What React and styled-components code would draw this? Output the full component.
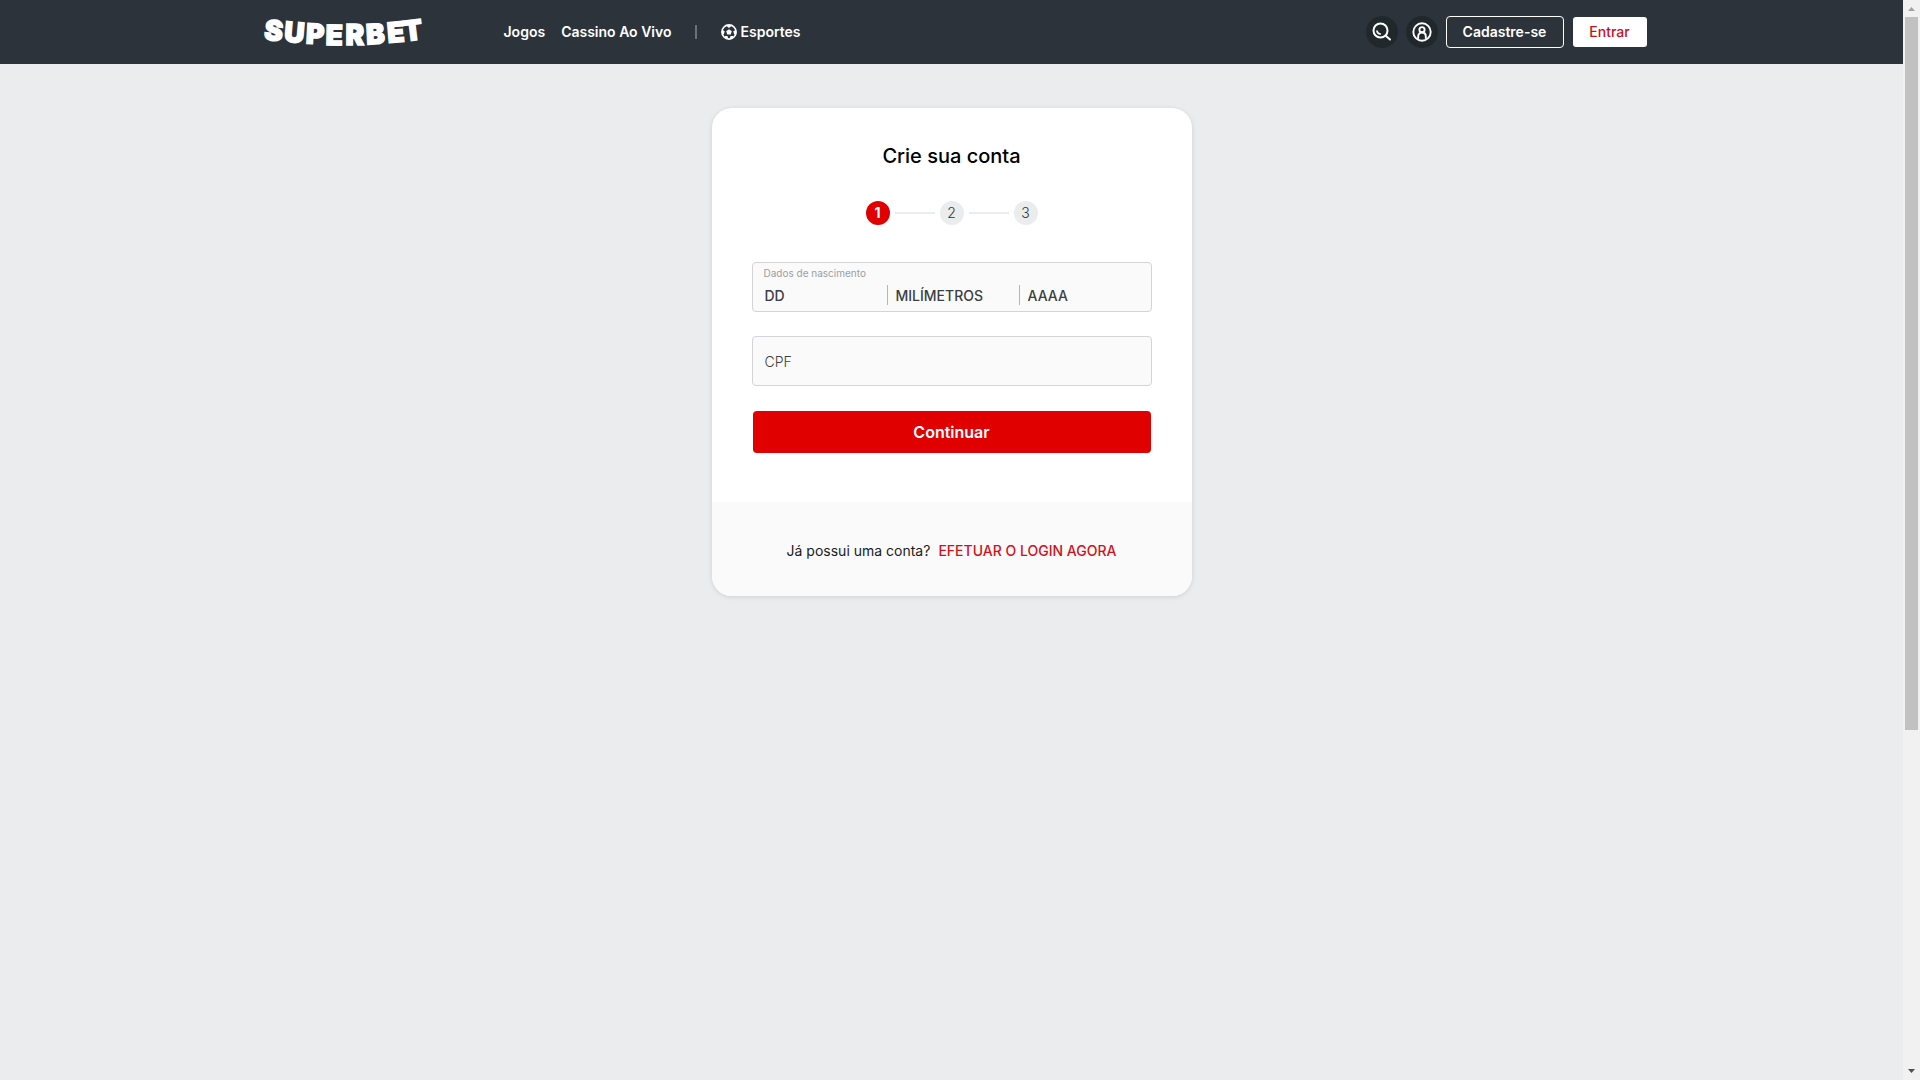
import React from "react";
import styled, { createGlobalStyle } from "styled-components";

const GlobalStyle = createGlobalStyle`
  *, *::before, *::after { box-sizing: border-box; }
  body {
    margin: 0;
    background: #ebecee;
    font-family: Inter, "Liberation Sans", sans-serif;
    font-size: 14px;
    line-height: 20px;
    color: #1a1a1a;
  }
  button, input { font-family: inherit; font-size: inherit; line-height: inherit; }
  a { text-decoration: none; color: inherit; }
`;

const Shell = styled.div`
  display: flex;
  height: 100vh;
  overflow: hidden;
`;

const Page = styled.div`
  flex: 1;
  min-width: 0;
`;

const Header = styled.header`
  background: #2c333a;
  color: #fff;
`;

const HeaderInner = styled.div`
  display: flex;
  align-items: center;
  justify-content: space-between;
  max-width: 1392px;
  height: 64px;
  margin: 0 auto;
  padding-left: 8px;
`;

const LogoLink = styled.a`
  display: flex;
  margin-right: 80px;
`;

const LogoText = styled.text`
  font-family: Inter, sans-serif;
  font-size: 28px;
  font-weight: 900;
  fill: #fff;
  stroke: #fff;
  stroke-width: 1.4px;
  stroke-linejoin: miter;
`;

const Nav = styled.nav`
  display: flex;
  flex: 1;
  align-items: center;
`;

const NavLink = styled.a`
  display: flex;
  align-items: center;
  gap: 4px;
  margin-right: 16px;
  font-weight: 600;
`;

const NavDivider = styled.span`
  width: 2px;
  height: 14px;
  margin: 0 24px 0 7px;
  background: #6b7075;
`;

const Actions = styled.div`
  display: flex;
  align-items: center;
  gap: 8px;
`;

const IconButton = styled.button`
  display: flex;
  align-items: center;
  justify-content: center;
  width: 32px;
  height: 32px;
  padding: 0;
  border: 0;
  border-radius: 50%;
  background: #21282c;
  color: #fff;
`;

const ActionButton = styled.button`
  min-width: ${(p) => (p.$filled ? "76px" : "118px")};
  height: 32px;
  padding: 0 12px;
  border: 1px solid ${(p) => (p.$filled ? "transparent" : "#fff")};
  border-radius: 4px;
  background: ${(p) => (p.$filled ? "#fff" : "transparent")};
  background-clip: padding-box;
  color: ${(p) => (p.$filled ? "#c8101a" : "#fff")};
  font-weight: ${(p) => (p.$filled ? 500 : 600)};
`;

const Main = styled.main`
  display: flex;
  justify-content: center;
  padding-top: 44px;
`;

const Card = styled.section`
  width: 480px;
  border-radius: 20px;
  background: #fff;
  box-shadow: 0 1px 5px rgba(0, 0, 0, 0.12);
  overflow: hidden;
`;

const Form = styled.form`
  display: flex;
  flex-direction: column;
  gap: 24px;
  padding: 36px 40px 48px;
`;

const Title = styled.h1`
  margin: 0;
  color: #000;
  font-size: 20px;
  font-weight: 500;
  line-height: 24px;
  text-align: center;
`;

const Steps = styled.ol`
  display: flex;
  align-items: center;
  justify-content: center;
  gap: 5px;
  margin: 9px 0 13px;
  padding: 0;
  list-style: none;
`;

const Step = styled.li`
  width: 24px;
  height: 24px;
  border-radius: 50%;
  background: ${(p) => (p.$active ? "#e10000" : "#ebecee")};
  color: ${(p) => (p.$active ? "#fff" : "#303336")};
  font-weight: ${(p) => (p.$active ? 700 : 300)};
  line-height: 24px;
  text-align: center;
`;

const StepLine = styled.li`
  width: 40px;
  height: 2px;
  background: #ebecee;
`;

const fieldBox = `
  width: 100%;
  height: 50px;
  margin: 0;
  border: 1px solid #d4d4d6;
  border-radius: 4px;
  background: #fafafa;
`;

const DateField = styled.fieldset`
  ${fieldBox}
  min-width: 0;
  padding: 3px 0;
`;

const DateLabel = styled.legend`
  float: left;
  width: 100%;
  height: 19px;
  padding: 0 11px;
  color: #9c9ea1;
  font-size: 10px;
  line-height: 14px;
`;

const DateParts = styled.div`
  display: grid;
  clear: both;
  grid-template-columns: 134px 132px 1fr;
`;

const DateInput = styled.input`
  width: 100%;
  height: 20px;
  padding: 1px 8px 0;
  border: 0;
  border-left: 1px solid #b4b6b8;
  background: none;
  color: #3c3e41;
  font-weight: 500;
  &:first-child { padding-left: 12px; border-left: 0; }
  &::placeholder { color: inherit; opacity: 1; }
`;

const TextInput = styled.input`
  ${fieldBox}
  padding: 0 12px;
  color: #3c3e41;
  font-weight: 300;
  &::placeholder { color: inherit; opacity: 1; }
`;

const Submit = styled.button`
  height: 44px;
  border: 1px solid transparent;
  border-radius: 5px;
  background: #e10000;
  background-clip: padding-box;
  color: #fff;
  font-size: 16px;
  font-weight: 600;
`;

const CardFooter = styled.footer`
  display: flex;
  justify-content: center;
  gap: 8px;
  padding: 39px 40px 35px;
  background: #fafafa;
`;

const LoginLink = styled.a`
  color: #d0111b;
  font-weight: 500;
`;

const ScrollRail = styled.div`
  display: flex;
  flex-direction: column;
  width: 17px;
  padding: 0 2px;
  background: #f1f1f1;
`;

const ScrollThumb = styled.div`
  flex: 713;
  background: #c1c1c1;
`;

const ScrollSpace = styled.div`
  flex: 333;
`;

const ScrollArrow = styled.svg`
  flex: none;
  width: 13px;
  height: 17px;
`;

function Logo() {
  return (
    <svg width="160" height="48" viewBox="0 0 160 48" overflow="visible" role="img" aria-label="Superbet">
      <LogoText
        x="-0.5 19.5 41.5 61.5 81.5 102.5 124 140.5"
        y="31.5 33.5 35.5 37 37 36.5 35 33.500"
        rotate="6 5 3 1 0 -3 -5 -7"
      >
        SUPERBET
      </LogoText>
    </svg>
  );
}

function BallIcon() {
  return (
    <svg width="16" height="16" viewBox="0 0 16 16" fill="none" aria-hidden="true">
      <circle cx="8" cy="8" r="7.1" stroke="#fff" strokeWidth="1.7" />
      <path d="M8 5.2l2.8 2-1.1 3.3H6.3L5.2 7.2z" fill="#fff" />
      <path
        d="M4.6 1.2h6.8L8 4zM1 5.7l2.7 1.5-.9 3.4L.8 9.5zM15 5.7l-2.7 1.5.9 3.4 2-1.1zM3.6 12l2.8-.1 1 3.2-2.6-.7zM12.4 12l-2.8-.1-1 3.2 2.6-.7z"
        fill="#fff"
      />
    </svg>
  );
}

function SearchIcon() {
  return (
    <svg width="20" height="20" viewBox="0 0 20 20" fill="none" stroke="#fff" strokeWidth="2" strokeLinecap="round" aria-hidden="true">
      <circle cx="8.5" cy="8.5" r="7" />
      <path d="M13.7 13.7L18 17.5" />
      <path d="M5 9c.3 1.7 1.600 2.8 3.3 3" strokeWidth="1.6" />
    </svg>
  );
}

function AccountIcon() {
  return (
    <svg width="20" height="20" viewBox="0 0 20 20" fill="none" stroke="#fff" strokeWidth="1.9" strokeLinecap="round" aria-hidden="true">
      <circle cx="10" cy="10" r="8.7" />
      <circle cx="10" cy="7.7" r="2.6" />
      <path d="M6.2 16v-1.500c0-2.400 1.500-4 3.800-4s3.800 1.600 3.800 4V16" />
    </svg>
  );
}

export default function App() {
  return (
    <>
      <GlobalStyle />
      <Shell>
        <Page>
          <Header>
            <HeaderInner>
              <LogoLink href="#inicio"><Logo /></LogoLink>
              <Nav>
                <NavLink href="#jogos">Jogos</NavLink>
                <NavLink href="#cassino">Cassino Ao Vivo</NavLink>
                <NavDivider />
                <NavLink href="#esportes"><BallIcon />Esportes</NavLink>
              </Nav>
              <Actions>
                <IconButton type="button" aria-label="Buscar"><SearchIcon /></IconButton>
                <IconButton type="button" aria-label="Conta"><AccountIcon /></IconButton>
                <ActionButton type="button">Cadastre-se</ActionButton>
                <ActionButton type="button" $filled>Entrar</ActionButton>
              </Actions>
            </HeaderInner>
          </Header>
          <Main>
            <Card>
              <Form onSubmit={(e) => e.preventDefault()}>
                <Title>Crie sua conta</Title>
                <Steps>
                  <Step $active aria-current="step">1</Step>
                  <StepLine aria-hidden="true" />
                  <Step>2</Step>
                  <StepLine aria-hidden="true" />
                  <Step>3</Step>
                </Steps>
                <DateField>
                  <DateLabel>Dados de nascimento</DateLabel>
                  <DateParts>
                    <DateInput aria-label="Dia" placeholder="DD" inputMode="numeric" />
                    <DateInput aria-label="Mês" placeholder="MILÍMETROS" inputMode="numeric" />
                    <DateInput aria-label="Ano" placeholder="AAAA" inputMode="numeric" />
                  </DateParts>
                </DateField>
                <TextInput aria-label="CPF" placeholder="CPF" inputMode="numeric" />
                <Submit type="submit">Continuar</Submit>
              </Form>
              <CardFooter>
                <span>Já possui uma conta?</span>
                <LoginLink href="#login">EFETUAR O LOGIN AGORA</LoginLink>
              </CardFooter>
            </Card>
          </Main>
        </Page>
        <ScrollRail aria-hidden="true">
          <ScrollArrow viewBox="0 0 13 17"><path d="M3 11h7L6.5 7z" fill="#a3a3a3" /></ScrollArrow>
          <ScrollThumb />
          <ScrollSpace />
          <ScrollArrow viewBox="0 0 13 17"><path d="M3 6h7l-3.5 4z" fill="#505050" /></ScrollArrow>
        </ScrollRail>
      </Shell>
    </>
  );
}
